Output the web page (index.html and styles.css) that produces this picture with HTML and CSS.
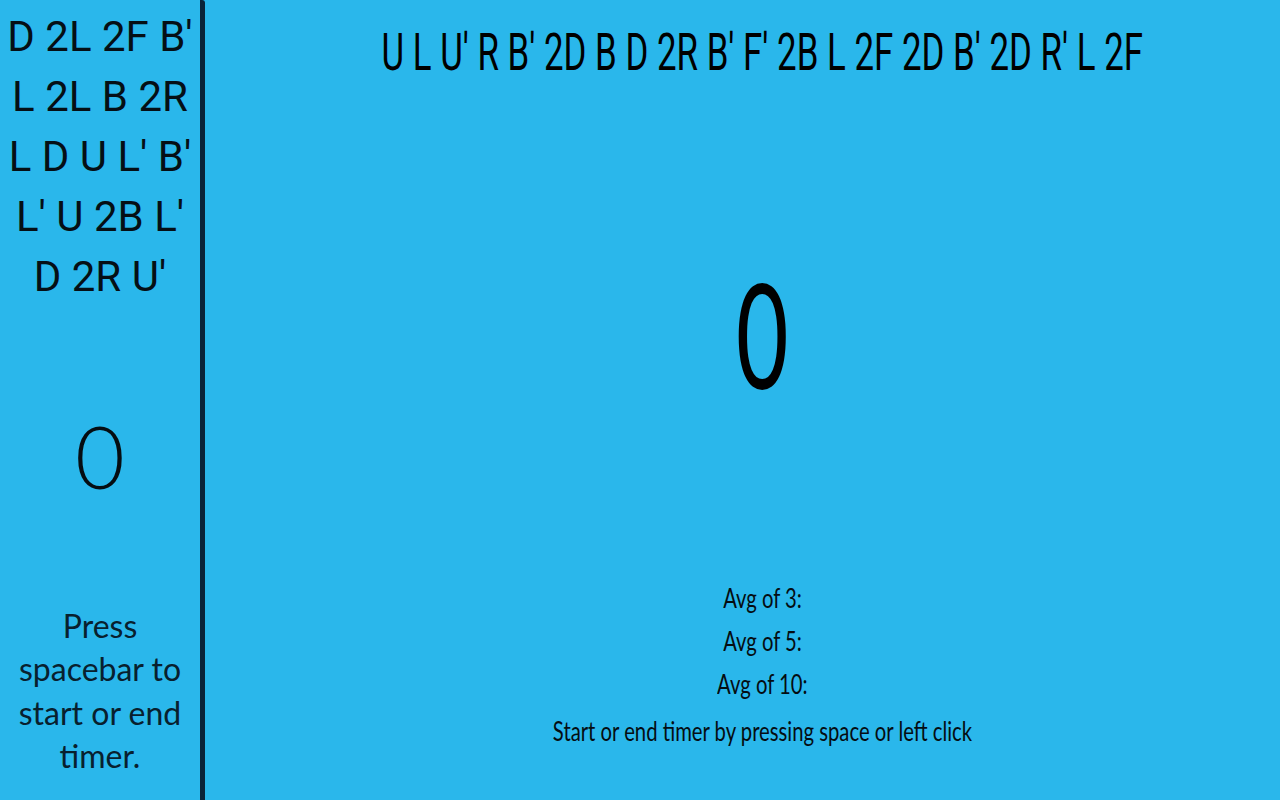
FILE: index.html
```html
<!DOCTYPE html>
<html lang="en">
<head>
<meta charset="utf-8">
<title>Cube Timer</title>
<link rel="stylesheet" href="styles.css">
</head>
<body>
<div class="app">
  <aside class="sidebar">
    <div class="side-scramble">D 2L 2F B' L 2L B 2R L D U L' B' L' U 2B L' D 2R U'</div>
    <div class="side-time">0</div>
    <div class="side-hint">Press spacebar to start or end timer.</div>
  </aside>
  <main class="main">
    <div class="scramble">U L U' R B' 2D B D 2R B' F' 2B L 2F 2D B' 2D R' L 2F</div>
    <div class="time">0</div>
    <div class="stats">
      <div class="stat">Avg of 3:</div>
      <div class="stat">Avg of 5:</div>
      <div class="stat">Avg of 10:</div>
      <div class="stat hint">Start or end timer by pressing space or left click</div>
    </div>
  </main>
</div>
</body>
</html>
```

FILE: styles.css
```css
* { box-sizing: border-box; }
html, body {
  margin: 0;
  padding: 0;
  height: 100%;
}
body {
  background: #2ab7eb;
  color: #000;
  font-family: Lato, "Noto Sans", sans-serif;
  overflow: hidden;
}
.app {
  display: flex;
  width: 1280px;
  height: 800px;
}
.sidebar {
  width: 205px;
  flex: 0 0 205px;
  border-right: 5px solid #0a2439;
  border-top-right-radius: 3px;
  display: flex;
  flex-direction: column;
  align-items: center;
  text-align: center;
}
.side-scramble {
  width: 200px;
  margin-top: 7px;
  font-family: Roboto, "DejaVu Sans", sans-serif;
  font-size: 42px;
  line-height: 60px;
  color: #050f15;
}
.side-time {
  margin-top: 106px;
  font-size: 86px;
  line-height: 86px;
  font-weight: 300;
  color: #050d12;
}
.side-hint {
  margin-top: 105px;
  width: 190px;
  font-size: 32px;
  line-height: 43.3px;
  color: #08202e;
}
.main {
  flex: 1 1 0;
  min-width: 0;
  padding-left: 40px;
  display: flex;
  flex-direction: column;
  align-items: center;
  text-align: center;
}
.scramble,
.time {
  transform: scaleX(0.67);
  white-space: nowrap;
}
.scramble {
  margin-top: 22px;
  font-family: Roboto, "DejaVu Sans", sans-serif;
  font-size: 52px;
  line-height: 61px;
  color: #000;
}
.time {
  margin-top: 177px;
  font-size: 146px;
  line-height: 146px;
  transform: scaleX(0.62);
}
.stats {
  margin-top: 170px;
  display: flex;
  flex-direction: column;
  align-items: center;
}
.stat {
  transform: scaleX(0.75);
  white-space: nowrap;
  font-size: 27px;
  line-height: 43px;
  color: #050d12;
}
.stat.hint {
  margin-top: 4px;
}
```
